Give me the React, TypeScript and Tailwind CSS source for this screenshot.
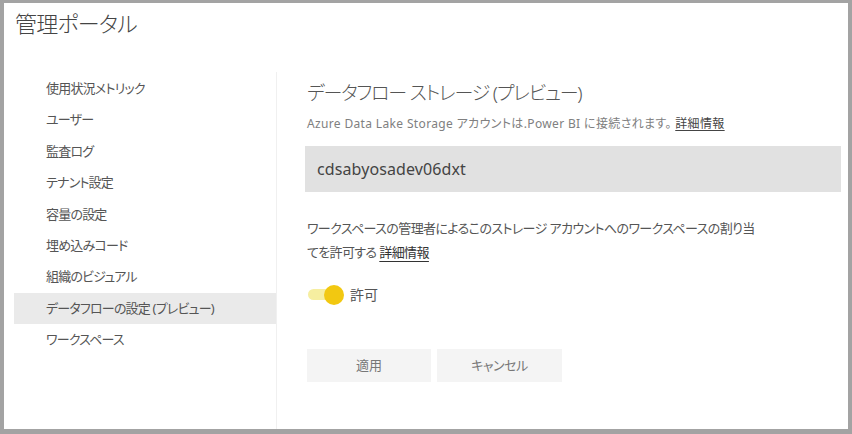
import React from 'react';

const NAV_ITEMS = [
  '使用状況メトリック',
  'ユーザー',
  '監査ログ',
  'テナント設定',
  '容量の設定',
  '埋め込みコード',
  '組織のビジュアル',
  'データフローの設定 (プレビュー)',
  'ワークスペース',
];

const SELECTED = 7;

export default function App() {
  return (
    <div
      className="w-[852px] h-[434px] bg-[#a3a3a3] pt-[3px] pl-[4px] pr-[4px] pb-[5px] text-[#333] [font-feature-settings:'palt']"
      style={{ fontFamily: '"Noto Sans", "Noto Sans CJK JP", sans-serif' }}
    >
      <div className="w-full h-full bg-white flex flex-col">
        {/* HEADER */}
        <div className="h-[69px] pl-[11px] pt-[4px]">
          <h1 className="text-[22px] leading-[32px] font-light text-[#444] tracking-[-0.8px]">管理ポータル</h1>
        </div>

        <div className="flex-1 flex min-h-0">
          {/* SIDEBAR */}
          <aside className="w-[273px] border-r border-[#f0f0f0] pl-[10px] pt-[1px]">
            {NAV_ITEMS.map((item, i) => (
              <div
                key={item}
                className={`h-[31.4px] flex items-center pl-[32px] text-[13px] tracking-[-0.8px] text-[#555] ${
                  i === SELECTED ? 'bg-[#eaeaea]' : ''
                }`}
              >
                {item}
              </div>
            ))}
          </aside>

          {/* MAIN */}
          <main className="flex-1 pl-[30px] pr-[7px] pt-[6px]">
            <h2 className="text-[19px] leading-[30px] font-light text-[#555] tracking-[-1.2px]">
              データフロー ストレージ (プレビュー)
            </h2>
            <p className="mt-[7px] text-[12px] leading-[18px] text-[#808080] tracking-[0.35px]">
              Azure Data Lake Storage アカウントは.Power BI に接続されます。{' '}
              <span className="text-[#444] underline underline-offset-2">詳細情報</span>
            </p>
            <div className="mt-[13px] ml-[-2px] h-[46px] bg-[#e1e1e1] flex items-center pl-[12px] text-[16px] text-[#444] tracking-[0.1px]">
              cdsabyosadev06dxt
            </div>
            <p className="mt-[24px] text-[13px] leading-[24px] text-[#555] tracking-[-0.6px]">
              ワークスペースの管理者によるこのストレージ アカウントへのワークスペースの割り当
              <br />
              てを許可する{' '}
              <span className="text-[#333] underline underline-offset-4">詳細情報</span>
            </p>
            <div className="mt-[20px] flex items-center gap-[6px]">
              <div className="relative w-[37px] h-[20px] flex items-center">
                <div className="ml-[1px] w-[30px] h-[11px] rounded-full bg-[#f6eea0]" />
                <div className="absolute right-0 top-0 w-[20px] h-[20px] rounded-full bg-[#f2c811]" />
              </div>
              <span className="text-[14px] text-[#555]">許可</span>
            </div>
            <div className="mt-[44px] flex gap-[6px]">
              <button className="w-[124px] h-[33px] bg-[#f4f4f4] text-[13px] text-[#777]">適用</button>
              <button className="w-[125px] h-[33px] bg-[#f4f4f4] text-[13px] text-[#777] tracking-[-0.5px]">キャンセル</button>
            </div>
          </main>
        </div>
      </div>
    </div>
  );
}
